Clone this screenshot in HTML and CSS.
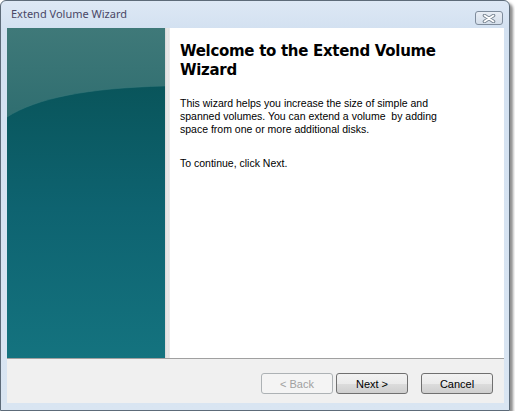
FILE: index.html
```html
<!DOCTYPE html>
<html>
<head>
<meta charset="utf-8">
<title>Extend Volume Wizard</title>
<link rel="stylesheet" href="styles.css">
</head>
<body>
<div class="window">
  <div class="titlebar">
    <span class="title">Extend Volume Wizard</span>
    <button class="close" type="button" aria-label="Close">
      <svg width="14" height="9" viewBox="0 0 14 9">
        <path d="M2.5 1.5 L11.5 7.5 M11.5 1.5 L2.5 7.5" stroke="#7b8794" stroke-width="3.6" stroke-linecap="round" fill="none"/>
        <path d="M2.5 1.5 L11.5 7.5 M11.5 1.5 L2.5 7.5" stroke="#ffffff" stroke-width="1.6" stroke-linecap="round" fill="none"/>
      </svg>
    </button>
  </div>
  <div class="client">
    <div class="main">
      <div class="banner">
        <svg class="banner-art" width="158" height="330" viewBox="0 0 158 330" preserveAspectRatio="none">
          <defs>
            <linearGradient id="sky" x1="0" y1="0" x2="0" y2="1">
              <stop offset="0" stop-color="#3f7979"/>
              <stop offset="1" stop-color="#2a6a6d"/>
            </linearGradient>
            <linearGradient id="sea" x1="0" y1="0" x2="0" y2="1">
              <stop offset="0" stop-color="#09555b"/>
              <stop offset="0.45" stop-color="#0e6370"/>
              <stop offset="1" stop-color="#14737f"/>
            </linearGradient>
          </defs>
          <rect x="0" y="0" width="158" height="120" fill="url(#sky)"/>
          <path d="M0 89 C30 70 80 60 158 58 L158 330 L0 330 Z" fill="url(#sea)"/>
          <path d="M0 89 C30 70 80 60 158 58" stroke="#3a7a7c" stroke-width="1" fill="none" opacity="0.5"/>
        </svg>
      </div>
      <div class="edge"></div>
      <div class="content">
        <h1 class="heading">Welcome to the Extend Volume Wizard</h1>
        <p class="intro">This wizard helps you increase the size of simple and<br>spanned volumes. You can extend a volume&nbsp; by adding<br>space from one or more additional disks.</p>
        <p class="hint">To continue, click Next.</p>
      </div>
    </div>
    <div class="footer">
      <button class="btn" type="button" disabled>&lt; Back</button>
      <button class="btn" type="button">Next &gt;</button>
      <button class="btn cancel" type="button">Cancel</button>
    </div>
  </div>
</div>
</body>
</html>
```

FILE: styles.css
```css
html, body {
  margin: 0;
  padding: 0;
  background: #ffffff;
}

.window {
  box-sizing: border-box;
  width: 510px;
  height: 411px;
  border: 1px solid #5d6b79;
  border-radius: 6px 6px 0 0;
  background: linear-gradient(#dde8f5 0, #d3e1f1 28px, #d9e5f2 100%);
  padding: 0 5px 7px 6px;
  display: flex;
  flex-direction: column;
  box-shadow: 3px 3px 3px rgba(0, 0, 0, 0.45);
}

.titlebar {
  height: 27px;
  display: flex;
  justify-content: space-between;
  align-items: flex-start;
}

.title {
  font-family: "Noto Sans", sans-serif;
  font-size: 11px;
  line-height: 16px;
  color: #4a4766;
  margin: 5px 0 0 4px;
}

.close {
  box-sizing: border-box;
  width: 28px;
  height: 14px;
  margin: 10px 1px 0 0;
  padding: 0;
  border: 1px solid #7f8c9c;
  border-radius: 3px;
  background: linear-gradient(#e9eef5, #d4deea);
  display: flex;
  align-items: center;
  justify-content: center;
}

.close svg {
  display: block;
}

.client {
  flex: 1;
  display: flex;
  flex-direction: column;
  background: #ffffff;
}

.main {
  height: 330px;
  display: flex;
  border-bottom: 1px solid #a0a0a0;
}

.banner {
  width: 158px;
  flex: none;
}

.banner-art {
  display: block;
}

.edge {
  width: 5px;
  flex: none;
  background: linear-gradient(90deg, #d6d6d6 0, #e9e9e9 2px, #e2e2e2 4px, #f2f2f2 5px);
}

.content {
  flex: 1;
  padding: 14px 0 0 10px;
  font-family: "Liberation Sans", Arial, sans-serif;
  color: #000000;
}

.heading {
  margin: 0;
  font-family: "DejaVu Sans", Verdana, sans-serif;
  font-weight: bold;
  font-size: 15px;
  letter-spacing: -0.3px;
  line-height: 19px;
  width: 290px;
}

.intro {
  margin: 17px 0 0 0;
  font-size: 10.5px;
  line-height: 13px;
}

.hint {
  margin: 21px 0 0 0;
  font-size: 10.5px;
  line-height: 13px;
}

.footer {
  flex: 1;
  background: #f0f0f0;
  display: flex;
  justify-content: flex-end;
  align-items: flex-start;
  padding: 14px 11px 0 0;
}

.btn {
  box-sizing: border-box;
  width: 72px;
  height: 21px;
  margin-left: 3px;
  padding: 0;
  border: 1px solid #707070;
  border-radius: 3px;
  background: linear-gradient(#f2f2f2 0, #ebebeb 50%, #dddddd 51%, #cfcfcf 100%);
  font-family: "Liberation Sans", Arial, sans-serif;
  font-size: 11px;
  color: #000000;
}

.btn:disabled {
  border-color: #adb2b5;
  background: #f4f4f4;
  color: #a0a0a0;
}

.cancel {
  margin-left: 13px;
}
```
